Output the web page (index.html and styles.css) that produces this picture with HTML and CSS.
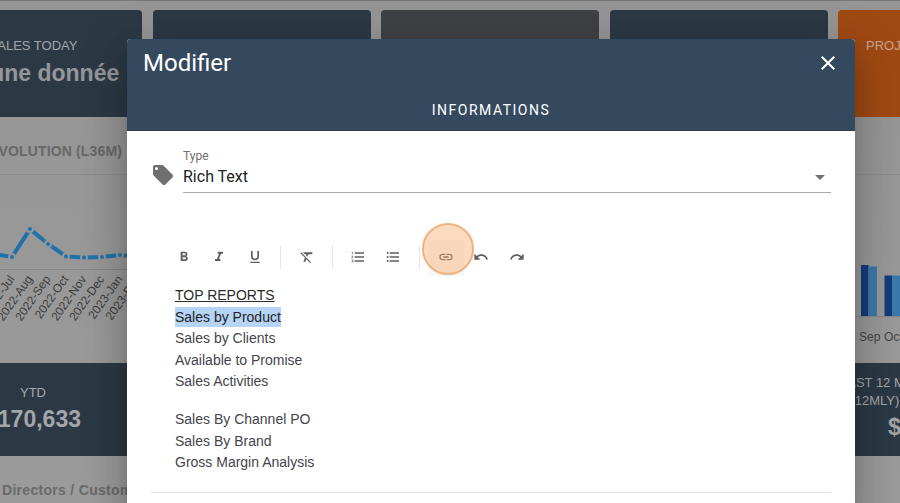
FILE: index.html
```html
<!DOCTYPE html>
<html lang="fr">
<head>
<meta charset="utf-8">
<title>Modifier</title>
<link rel="stylesheet" href="styles.css">
</head>
<body>
<div class="page">
  <div class="dashboard">
    <div class="row-top">
      <div class="card card-dark"><div class="card-label">SALES TODAY</div><div class="card-value">Aucune donnée</div></div>
      <div class="card card-dark"></div>
      <div class="card card-gray"></div>
      <div class="card card-dark"></div>
      <div class="card card-orange"><div class="card-label">PROJECTED</div></div>
    </div>
    <div class="section-head"><span class="section-title">EVOLUTION (L36M)</span></div>
    <svg class="chart" width="900" height="188" viewBox="0 175 900 188">
      <line x1="0" y1="269.5" x2="127" y2="269.5" class="axis"/>
      <line x1="855" y1="316.5" x2="900" y2="316.5" class="axis"/>
      <polyline class="series" points="-6,254 12,257 30,229 48,244 66,256.5 84,257.5 102,257 120,255 138,257"/>
      <g class="dots">
        <circle cx="12" cy="257" r="3"/><circle cx="30" cy="229" r="3"/><circle cx="48" cy="244" r="3"/><circle cx="66" cy="256.5" r="3"/><circle cx="84" cy="257.5" r="3"/><circle cx="102" cy="257" r="3"/><circle cx="120" cy="255" r="3"/>
      </g>
      <g class="tick-labels">
        <text transform="translate(15 279) rotate(-55)">2022-Jul</text>
        <text transform="translate(33 279) rotate(-55)">2022-Aug</text>
        <text transform="translate(51 279) rotate(-55)">2022-Sep</text>
        <text transform="translate(69 279) rotate(-55)">2022-Oct</text>
        <text transform="translate(87 279) rotate(-55)">2022-Nov</text>
        <text transform="translate(105 279) rotate(-55)">2022-Dec</text>
        <text transform="translate(123 279) rotate(-55)">2023-Jan</text>
        <text transform="translate(141 279) rotate(-55)">2023-Feb</text>
      </g>
      <rect x="861" y="265" width="7.5" height="51" class="bar-a"/>
      <rect x="868.5" y="266.5" width="8.5" height="49.5" class="bar-b"/>
      <rect x="884.5" y="275.5" width="7.5" height="40.5" class="bar-a"/>
      <rect x="892" y="275.5" width="8" height="40.5" class="bar-b"/>
      <text x="859" y="341" class="bar-label">Sep</text>
      <text x="884" y="341" class="bar-label">Oct</text>
    </svg>
    <div class="row-bottom">
      <div class="card-wide card-dark"><div class="wide-label">YTD</div><div class="wide-value">$170,633</div></div>
      <div class="card-right card-dark"><div class="wide-label">LAST 12 MONTHS</div><div class="wide-label second-line">(R12MLY)</div><div class="wide-value">$</div></div>
    </div>
    <div class="footer-title">Directors / Customers</div>
  </div>

  <div class="modal">
    <header class="modal-head">
      <div class="title-row">
        <span class="modal-title">Modifier</span>
        <svg class="close" viewBox="0 0 24 24"><path d="M19,6.41L17.59,5L12,10.59L6.41,5L5,6.41L10.59,12L5,17.59L6.41,19L12,13.41L17.59,19L19,17.59L13.41,12L19,6.41Z"/></svg>
      </div>
      <div class="tab">INFORMATIONS</div>
    </header>
    <div class="modal-body">
      <div class="field">
        <svg class="tag" viewBox="0 0 24 24"><path d="M5.5,7A1.5,1.5 0 0,1 4,5.5A1.5,1.5 0 0,1 5.5,4A1.5,1.5 0 0,1 7,5.5A1.5,1.5 0 0,1 5.5,7M21.41,11.58L12.41,2.58C12.05,2.22 11.55,2 11,2H4C2.89,2 2,2.89 2,4V11C2,11.55 2.22,12.05 2.59,12.41L11.58,21.41C11.95,21.77 12.45,22 13,22C13.55,22 14.05,21.77 14.41,21.41L21.41,14.41C21.78,14.05 22,13.55 22,13C22,12.44 21.77,11.94 21.41,11.58Z"/></svg>
        <div class="select">
          <div class="select-label">Type</div>
          <div class="select-value"><span>Rich Text</span><span class="caret"></span></div>
        </div>
      </div>
      <div class="toolbar">
        <button class="tool"><svg viewBox="0 0 24 24"><path d="M13.5,15.5H10V12.5H13.5A1.5,1.5 0 0,1 15,14A1.5,1.5 0 0,1 13.5,15.5M10,6.5H13A1.5,1.5 0 0,1 14.5,8A1.5,1.5 0 0,1 13,9.5H10M15.6,10.79C16.57,10.11 17.25,9 17.25,8C17.25,5.74 15.5,4 13.25,4H7V18H14.04C16.14,18 17.75,16.3 17.75,14.21C17.75,12.69 16.89,11.39 15.6,10.79Z"/></svg></button>
        <button class="tool"><svg viewBox="0 0 24 24"><path d="M10,4V7H12.21L8.79,15H6V18H14V15H11.79L15.21,7H18V4H10Z"/></svg></button>
        <button class="tool"><svg viewBox="0 0 24 24"><path d="M5,21H19V19H5V21M12,17A6,6 0 0,0 18,11V3H15.5V11A3.5,3.5 0 0,1 12,14.5A3.5,3.5 0 0,1 8.5,11V3H6V11A6,6 0 0,0 12,17Z"/></svg></button>
        <span class="sep sep-a"></span>
        <button class="tool"><svg viewBox="0 0 24 24"><path d="M6,5V5.18L8.82,8H11.22L10.5,9.68L12.6,11.78L14.21,8H20V5H6M3.27,5L2,6.27L8.97,13.24L6.5,19H9.5L11.07,15.34L16.73,21L18,19.73L3.55,5.27L3.27,5Z"/></svg></button>
        <span class="sep sep-b"></span>
        <button class="tool"><svg viewBox="0 0 24 24"><path d="M7,13V11H21V13H7M7,19V17H21V19H7M7,7V5H21V7H7M3,8V5H2V4H4V8H3M2,17V16H5V20H2V19H4V18.5H3V17.5H4V17H2M4.25,10A0.75,0.75 0 0,1 5,10.75C5,10.95 4.92,11.14 4.79,11.27L3.12,13H5V14H2V13.08L4,11H2V10H4.25Z"/></svg></button>
        <button class="tool"><svg viewBox="0 0 24 24"><path d="M7,5H21V7H7V5M7,13V11H21V13H7M4,4.5A1.5,1.5 0 0,1 5.5,6A1.5,1.5 0 0,1 4,7.5A1.5,1.5 0 0,1 2.5,6A1.5,1.5 0 0,1 4,4.5M4,10.5A1.5,1.5 0 0,1 5.5,12A1.5,1.5 0 0,1 4,13.5A1.5,1.5 0 0,1 2.5,12A1.5,1.5 0 0,1 4,10.5M7,19V17H21V19H7M4,16.5A1.5,1.5 0 0,1 5.5,18A1.5,1.5 0 0,1 4,19.5A1.5,1.5 0 0,1 2.5,18A1.5,1.5 0 0,1 4,16.5Z"/></svg></button>
        <span class="sep sep-c"></span>
        <button class="tool tool-link"><svg viewBox="0 0 24 24"><path d="M3.9,12C3.9,10.29 5.29,8.9 7,8.9H11V7H7A5,5 0 0,0 2,12A5,5 0 0,0 7,17H11V15.1H7C5.29,15.1 3.9,13.71 3.9,12M8,13H16V11H8V13M17,7H13V8.9H17C18.71,8.9 20.1,10.29 20.1,12C20.1,13.71 18.71,15.1 17,15.1H13V17H17A5,5 0 0,0 22,12A5,5 0 0,0 17,7Z"/></svg></button>
        <button class="tool"><svg viewBox="0 0 24 24"><path d="M12.5,8C9.85,8 7.45,9 5.6,10.6L2,7V16H11L7.38,12.38C8.77,11.22 10.54,10.5 12.5,10.5C16.04,10.5 19.05,12.81 20.1,16L22.47,15.22C21.08,11.03 17.15,8 12.5,8Z"/></svg></button>
        <button class="tool"><svg viewBox="0 0 24 24"><path d="M18.4,10.6C16.55,9 14.15,8 11.5,8C6.85,8 2.92,11.03 1.54,15.22L3.9,16C4.95,12.81 7.95,10.5 11.5,10.5C13.45,10.5 15.23,11.22 16.62,12.38L13,16H22V7L18.4,10.6Z"/></svg></button>
      </div>
      <div class="editor">
        <p class="para"><u>TOP REPORTS</u><br><mark class="selection">Sales by Product</mark><br>Sales by Clients<br>Available to Promise<br>Sales Activities</p>
        <p class="para">Sales By Channel PO<br>Sales By Brand<br>Gross Margin Analysis</p>
      </div>
      <div class="divider"></div>
    </div>
  </div>
  <div class="click-marker"></div>
</div>
</body>
</html>
```

FILE: styles.css
```css
* { box-sizing: border-box; }
html, body { margin: 0; padding: 0; }
body { width: 900px; height: 503px; overflow: hidden; font-family: "Liberation Sans", Arial, sans-serif; }

.page { position: relative; width: 900px; height: 503px; overflow: hidden; background: #999a9b; }

.dashboard { display: flex; flex-direction: column; height: 503px; border-top: 1px solid #777; background: linear-gradient(#959595, #9b9b9b); }

.row-top { display: flex; gap: 10.5px; margin-left: -76px; padding-top: 9px; height: 116px; flex: none; }
.card { flex: 0 0 218px; height: 107px; border-radius: 4px; padding-top: 27px; text-align: center; color: #a3a6a9; }
.card-dark { background: #2c3945; }
.card-gray { background: #3f4145; }
.card-orange { background: #a04a13; color: #c9a58f; text-align: left; padding-left: 28px; }
.card-label { font-size: 13px; line-height: 18px; }
.card-value { font-size: 23px; font-weight: 700; line-height: 34px; margin-top: 1px; color: #949699; white-space: nowrap; }

.section-head { flex: none; height: 58px; padding-top: 26px; border-bottom: 1px solid #8d8d8d; overflow: hidden; }
.section-title { display: block; margin-left: -11px; font-size: 14px; line-height: 16px; font-weight: 700; color: #676767; letter-spacing: 0.15px; white-space: nowrap; }

.chart { display: block; flex: none; }
.axis { stroke: #868686; stroke-width: 1; }
.series { fill: none; stroke: #1e72ab; stroke-width: 4; }
.dots circle { fill: #1e72ab; stroke: #979797; stroke-width: 2; }
.tick-labels text { font-family: "Liberation Sans", Arial, sans-serif; font-size: 12px; fill: #3c3c3c; text-anchor: end; }
.bar-a { fill: #123d78; }
.bar-b { fill: #3b78ac; }
.bar-label { font-family: "Liberation Sans", Arial, sans-serif; font-size: 12px; fill: #444; }

.row-bottom { display: flex; flex: none; height: 93px; justify-content: space-between; margin-left: -76px; }
.card-wide { flex: 0 0 218px; text-align: center; padding-top: 21px; color: #a3a6a9; }
.card-right { flex: 0 0 62px; text-align: left; padding: 11px 0 0 2px; color: #a3a6a9; overflow: hidden; }
.wide-label { font-size: 13px; line-height: 18px; white-space: nowrap; }
.second-line { margin-left: 1px; }
.wide-value { font-size: 23px; font-weight: 700; line-height: 32px; margin-top: 1px; white-space: nowrap; }
.card-right .wide-value { padding-left: 48px; }

.footer-title { flex: none; padding-top: 26px; margin-left: 2px; font-size: 14px; line-height: 16px; font-weight: 700; color: #6a6a6a; letter-spacing: 0.3px; white-space: nowrap; }

.modal { position: absolute; left: 127px; top: 39px; width: 728px; height: 480px; background: #fff; border-radius: 4px 4px 0 0; box-shadow: 0 11px 15px -7px rgba(0,0,0,.2), 0 24px 38px 3px rgba(0,0,0,.14), 0 9px 46px 8px rgba(0,0,0,.12); overflow: hidden; display: flex; flex-direction: column; }
.modal-head { flex: none; height: 92px; background: #34495e; color: #fff; padding: 0 16px; border-bottom: 1px solid #2d3e50; }
.title-row { display: flex; justify-content: space-between; align-items: center; height: 46px; padding-top: 1px; }
.modal-title { font-family: Roboto, sans-serif; font-size: 24px; line-height: 46px; }
.close { width: 24px; height: 24px; fill: #fff; margin-right: -1px; }
.tab { text-align: center; margin: 15px -16px 0; font-family: Roboto, sans-serif; font-size: 14px; font-weight: 400; line-height: 20px; letter-spacing: 1.5px; color: #fff; }

.modal-body { flex: 1; padding: 0 24px; }
.field { display: flex; align-items: flex-start; gap: 8px; padding-top: 17px; height: 61px; }
.tag { width: 24px; height: 24px; fill: #6f6f6f; flex: none; margin-top: 15px; }
.select { flex: 1; height: 45px; border-bottom: 1px solid #a9a9a9; }
.select-label { font-family: Roboto, sans-serif; font-size: 12px; line-height: 16px; color: #6e6e6e; }
.select-value { display: flex; justify-content: space-between; align-items: center; font-family: Roboto, sans-serif; font-size: 16px; line-height: 24px; color: #222; margin-top: 1px; }
.caret { width: 0; height: 0; border-left: 5px solid transparent; border-right: 5px solid transparent; border-top: 5px solid #6f6f6f; margin-right: 6px; }

.toolbar { display: flex; align-items: center; height: 24px; margin-top: 53px; margin-left: 15px; }
.tool { flex: none; width: 35.5px; height: 24px; padding: 0; border: 0; background: none; display: flex; align-items: center; justify-content: center; position: relative; }
.tool svg { width: 16px; height: 16px; fill: #5f5f5f; position: relative; }
.tool-link::before { content: ""; position: absolute; inset: -5px 0 -7px; background: #f8f8f8; }
.sep { flex: none; width: 1px; height: 24px; background: #e6e6e6; }
.sep-a { margin-left: 7px; margin-right: 9px; }
.sep-b { margin-left: 7px; margin-right: 7px; }
.sep-c { margin-left: 8px; margin-right: 8px; }

.editor { margin-top: 16px; margin-left: 24px; font-size: 14px; line-height: 21.6px; color: #44444c; }
.para { margin: 0 0 16px; }
.para u { color: #2a2a2a; }
.selection { background: #b5d4f6; color: #222; padding: 2px 0; }
.divider { height: 1px; background: #e4e4e4; margin-top: 18px; }

.click-marker { position: absolute; left: 422px; top: 223px; width: 52px; height: 52px; border-radius: 50%; border: 2px solid #f3b27c; background: rgba(248, 168, 104, .42); }
```
